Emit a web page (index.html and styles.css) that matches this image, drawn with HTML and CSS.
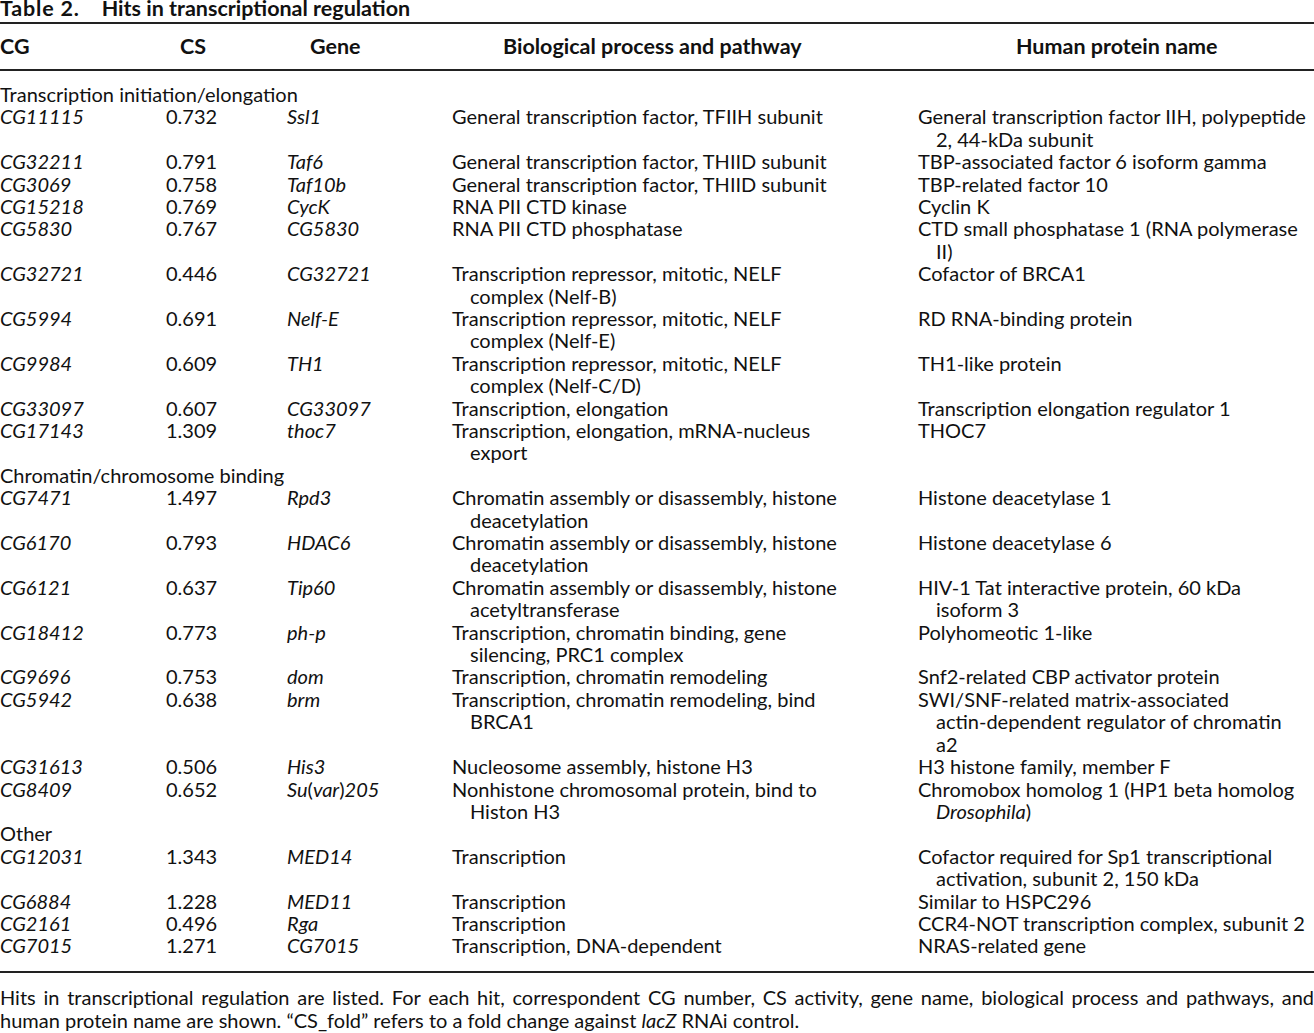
FILE: index.html
```html
<!DOCTYPE html>
<html lang="en">
<head>
<meta charset="utf-8">
<title>Table 2. Hits in transcriptional regulation</title>
<link rel="stylesheet" href="styles.css">
</head>
<body>
<div class="page">
  <h1 class="caption"><span class="label">Table 2.</span><span>Hits in transcriptional regulation</span></h1>
  <div class="table">
    <div class="row head">
      <div class="h h-cg">CG</div>
      <div class="h h-cs">CS</div>
      <div class="h h-gene">Gene</div>
      <div class="h h-bio">Biological process and pathway</div>
      <div class="h h-human">Human protein name</div>
    </div>
    <div class="body">
      <div class="group">Transcription initiation/elongation</div>
      <div class="row"><div class="c it">CG11115</div><div class="c">0.732</div><div class="c it">Ssl1</div><div class="c">General transcription factor, TFIIH subunit</div><div class="c">General transcription factor IIH, polypeptide<br>2, 44-kDa subunit</div></div>
      <div class="row"><div class="c it">CG32211</div><div class="c">0.791</div><div class="c it">Taf6</div><div class="c">General transcription factor, THIID subunit</div><div class="c">TBP-associated factor 6 isoform gamma</div></div>
      <div class="row"><div class="c it">CG3069</div><div class="c">0.758</div><div class="c it">Taf10b</div><div class="c">General transcription factor, THIID subunit</div><div class="c">TBP-related factor 10</div></div>
      <div class="row"><div class="c it">CG15218</div><div class="c">0.769</div><div class="c it">CycK</div><div class="c">RNA PII CTD kinase</div><div class="c">Cyclin K</div></div>
      <div class="row"><div class="c it">CG5830</div><div class="c">0.767</div><div class="c it">CG5830</div><div class="c">RNA PII CTD phosphatase</div><div class="c">CTD small phosphatase 1 (RNA polymerase<br>II)</div></div>
      <div class="row"><div class="c it">CG32721</div><div class="c">0.446</div><div class="c it">CG32721</div><div class="c">Transcription repressor, mitotic, NELF<br>complex (Nelf-B)</div><div class="c">Cofactor of BRCA1</div></div>
      <div class="row"><div class="c it">CG5994</div><div class="c">0.691</div><div class="c it">Nelf-E</div><div class="c">Transcription repressor, mitotic, NELF<br>complex (Nelf-E)</div><div class="c">RD RNA-binding protein</div></div>
      <div class="row"><div class="c it">CG9984</div><div class="c">0.609</div><div class="c it">TH1</div><div class="c">Transcription repressor, mitotic, NELF<br>complex (Nelf-C/D)</div><div class="c">TH1-like protein</div></div>
      <div class="row"><div class="c it">CG33097</div><div class="c">0.607</div><div class="c it">CG33097</div><div class="c">Transcription, elongation</div><div class="c">Transcription elongation regulator 1</div></div>
      <div class="row"><div class="c it">CG17143</div><div class="c">1.309</div><div class="c it">thoc7</div><div class="c">Transcription, elongation, mRNA-nucleus<br>export</div><div class="c">THOC7</div></div>

      <div class="group">Chromatin/chromosome binding</div>
      <div class="row"><div class="c it">CG7471</div><div class="c">1.497</div><div class="c it">Rpd3</div><div class="c">Chromatin assembly or disassembly, histone<br>deacetylation</div><div class="c">Histone deacetylase 1</div></div>
      <div class="row"><div class="c it">CG6170</div><div class="c">0.793</div><div class="c it">HDAC6</div><div class="c">Chromatin assembly or disassembly, histone<br>deacetylation</div><div class="c">Histone deacetylase 6</div></div>
      <div class="row"><div class="c it">CG6121</div><div class="c">0.637</div><div class="c it">Tip60</div><div class="c">Chromatin assembly or disassembly, histone<br>acetyltransferase</div><div class="c">HIV-1 Tat interactive protein, 60 kDa<br>isoform 3</div></div>
      <div class="row"><div class="c it">CG18412</div><div class="c">0.773</div><div class="c it">ph-p</div><div class="c">Transcription, chromatin binding, gene<br>silencing, PRC1 complex</div><div class="c">Polyhomeotic 1-like</div></div>
      <div class="row"><div class="c it">CG9696</div><div class="c">0.753</div><div class="c it">dom</div><div class="c">Transcription, chromatin remodeling</div><div class="c">Snf2-related CBP activator protein</div></div>
      <div class="row"><div class="c it">CG5942</div><div class="c">0.638</div><div class="c it">brm</div><div class="c">Transcription, chromatin remodeling, bind<br>BRCA1</div><div class="c">SWI/SNF-related matrix-associated<br>actin-dependent regulator of chromatin<br>a2</div></div>
      <div class="row"><div class="c it">CG31613</div><div class="c">0.506</div><div class="c it">His3</div><div class="c">Nucleosome assembly, histone H3</div><div class="c">H3 histone family, member F</div></div>
      <div class="row"><div class="c it">CG8409</div><div class="c">0.652</div><div class="c"><i>Su</i>(<i>var</i>)<i>205</i></div><div class="c">Nonhistone chromosomal protein, bind to<br>Histon H3</div><div class="c">Chromobox homolog 1 (HP1 beta homolog<br><i>Drosophila</i>)</div></div>

      <div class="group">Other</div>
      <div class="row"><div class="c it">CG12031</div><div class="c">1.343</div><div class="c it">MED14</div><div class="c">Transcription</div><div class="c">Cofactor required for Sp1 transcriptional<br>activation, subunit 2, 150 kDa</div></div>
      <div class="row"><div class="c it">CG6884</div><div class="c">1.228</div><div class="c it">MED11</div><div class="c">Transcription</div><div class="c">Similar to HSPC296</div></div>
      <div class="row"><div class="c it">CG2161</div><div class="c">0.496</div><div class="c it">Rga</div><div class="c">Transcription</div><div class="c">CCR4-NOT transcription complex, subunit 2</div></div>
      <div class="row"><div class="c it">CG7015</div><div class="c">1.271</div><div class="c it">CG7015</div><div class="c">Transcription, DNA-dependent</div><div class="c">NRAS-related gene</div></div>
    </div>
  </div>
  <p class="note">Hits in transcriptional regulation are listed. For each hit, correspondent CG number, CS activity, gene name, biological process and pathways, and human protein name are shown. “CS_fold” refers to a fold change against <i>lacZ</i> RNAi control.</p>
</div>
</body>
</html>
```

FILE: styles.css
```css
html, body {
  margin: 0;
  padding: 0;
  background: #ffffff;
}

.page {
  width: 1314px;
  color: #111111;
  font-family: Lato, "Open Sans", "Liberation Sans", sans-serif;
  font-size: 20px;
}

.caption {
  margin: 0;
  height: 22px;
  line-height: 16px;
  font-size: 21.5px;
  font-weight: 700;
  display: flex;
  gap: 22px;
  white-space: nowrap;
}

.label {
  letter-spacing: 0.8px;
}

.table {
  border-top: 2px solid #222;
  border-bottom: 2px solid #222;
}

.row {
  display: grid;
  grid-template-columns: 166px 121px 165px 466px 1fr;
  line-height: 22.4px;
}

.head {
  padding: 11px 0 12px;
  border-bottom: 2px solid #222;
  font-weight: 700;
  font-size: 21.5px;
}

.h { white-space: nowrap; }
.h-cs { padding-left: 14px; }
.h-gene { padding-left: 23px; }
.h-bio { padding-left: 51px; }
.h-human { padding-left: 98px; }

.body {
  padding: 11.5px 0 14px;
}

.group {
  line-height: 22.4px;
  white-space: nowrap;
}

.c {
  white-space: nowrap;
  padding-left: 18px;
  text-indent: -18px;
}

.it, i {
  font-style: italic;
}

.note {
  margin: 13px 0 0;
  line-height: 23px;
  text-align: justify;
}
```
